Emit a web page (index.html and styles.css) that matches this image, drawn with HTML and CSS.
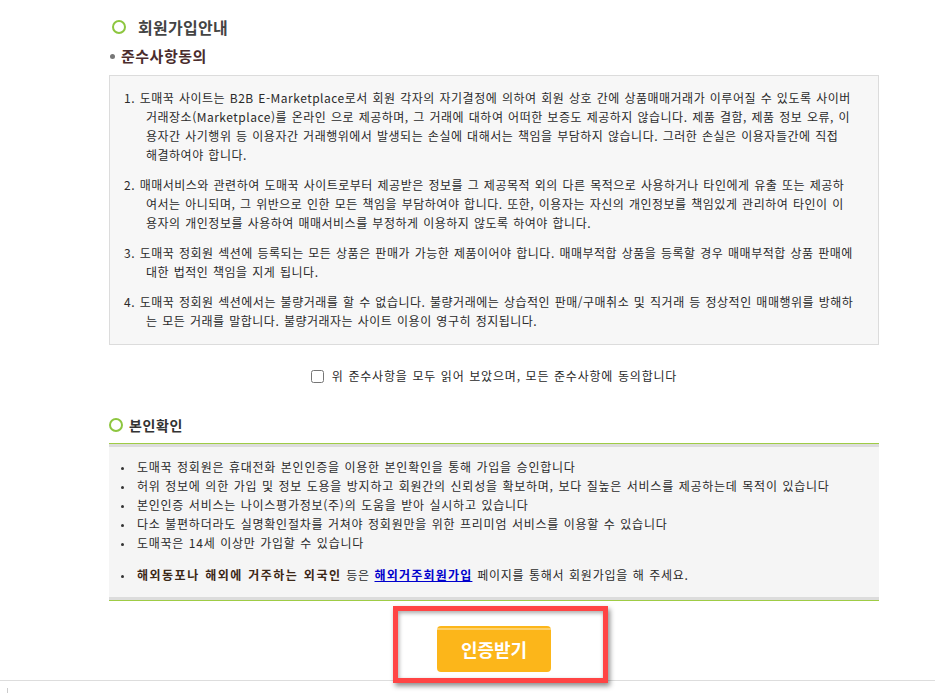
FILE: index.html
```html
<!DOCTYPE html>
<html lang="ko">
<head>
    <meta charset="utf-8">
    <title>회원가입안내</title>
    <link rel="stylesheet" href="styles.css">
</head>
<body>
    <div class="join-wrap">
        <!-- 회원가입안내 -->
        <h2 class="sec-title">회원가입안내</h2>
        <h3 class="sub-title">준수사항동의</h3>

        <ol class="agree-box">
            <li>1. 도매꾹 사이트는 B2B E-Marketplace로서 회원 각자의 자기결정에 의하여 회원 상호 간에 상품매매거래가 이루어질 수 있도록 사이버<br>거래장소(Marketplace)를 온라인 으로 제공하며, 그 거래에 대하여 어떠한 보증도 제공하지 않습니다. 제품 결함, 제품 정보 오류, 이<br>용자간 사기행위 등 이용자간 거래행위에서 발생되는 손실에 대해서는 책임을 부담하지 않습니다. 그러한 손실은 이용자들간에 직접<br>해결하여야 합니다.</li>
            <li>2. 매매서비스와 관련하여 도매꾹 사이트로부터 제공받은 정보를 그 제공목적 외의 다른 목적으로 사용하거나 타인에게 유출 또는 제공하<br>여서는 아니되며, 그 위반으로 인한 모든 책임을 부담하여야 합니다. 또한, 이용자는 자신의 개인정보를 책임있게 관리하여 타인이 이<br>용자의 개인정보를 사용하여 매매서비스를 부정하게 이용하지 않도록 하여야 합니다.</li>
            <li>3. 도매꾹 정회원 섹션에 등록되는 모든 상품은 판매가 가능한 제품이어야 합니다. 매매부적합 상품을 등록할 경우 매매부적합 상품 판매에<br>대한 법적인 책임을 지게 됩니다.</li>
            <li>4. 도매꾹 정회원 섹션에서는 불량거래를 할 수 없습니다. 불량거래에는 상습적인 판매/구매취소 및 직거래 등 정상적인 매매행위를 방해하<br>는 모든 거래를 말합니다. 불량거래자는 사이트 이용이 영구히 정지됩니다.</li>
        </ol>

        <p class="agree-check">
            <label><input type="checkbox" name="agree">위 준수사항을 모두 읽어 보았으며, 모든 준수사항에 동의합니다</label>
        </p>

        <!-- 본인확인 -->
        <h2 class="sec-title small">본인확인</h2>

        <ul class="auth-box">
            <li>도매꾹 정회원은 휴대전화 본인인증을 이용한 본인확인을 통해 가입을 승인합니다</li>
            <li>허위 정보에 의한 가입 및 정보 도용을 방지하고 회원간의 신뢰성을 확보하며, 보다 질높은 서비스를 제공하는데 목적이 있습니다</li>
            <li>본인인증 서비스는 나이스평가정보(주)의 도움을 받아 실시하고 있습니다</li>
            <li>다소 불편하더라도 실명확인절차를 거쳐야 정회원만을 위한 프리미엄 서비스를 이용할 수 있습니다</li>
            <li>도매꾹은 14세 이상만 가입할 수 있습니다</li>
            <li class="notice"><b>해외동포나 해외에 거주하는 외국인</b> 등은 <a href="#">해외거주회원가입</a> 페이지를 통해서 회원가입을 해 주세요.</li>
        </ul>

        <div class="btn-row">
            <a href="#" class="btn-auth">인증받기</a>
            <span class="mark"></span>
        </div>
    </div>

    <div class="footer"></div>
</body>
</html>
```

FILE: styles.css
```css
* {
    box-sizing: border-box;
}

body {
    margin: 0;
    background: #fff;
    color: #333;
    font-family: "Noto Sans CJK KR", "Noto Sans", sans-serif;
    font-size: 12px;
}

.join-wrap {
    width: 770px;
    margin-left: 109px;
    padding-top: 17px;
}

/* section titles */
.sec-title {
    display: flex;
    align-items: center;
    margin: 0;
    height: 20px;
    line-height: 20px;
    font-size: 16px;
    font-weight: 700;
    letter-spacing: 0.3px;
    color: #444;
}

.sec-title::before {
    content: "";
    width: 10px;
    height: 10px;
    margin: 0 12px 0 3px;
    border: 2.5px solid #8dc63f;
    border-radius: 50%;
}

.sec-title.small {
    margin-top: 27px;
    font-size: 14px;
    letter-spacing: 0.6px;
    color: #333;
}

.sec-title.small::before {
    margin: 0 6px 0 0;
}

.sub-title {
    display: flex;
    align-items: center;
    margin: 9px 0 0;
    height: 20px;
    line-height: 20px;
    font-size: 15px;
    font-weight: 700;
    letter-spacing: 0.5px;
    color: #4a2c2c;
}

.sub-title::before {
    content: "";
    width: 5px;
    height: 5px;
    margin: 0 6px 0 1px;
    border-radius: 50%;
    background: #777;
}

/* 준수사항 box */
.agree-box {
    list-style: none;
    margin: 9px 0 0;
    padding: 12px 6px 14px 36px;
    border: 1px solid #dcdcdc;
    background: #f7f7f7;
    color: #2a2a2a;
    line-height: 19px;
    letter-spacing: 0.5px;
    word-spacing: 0.8px;
    white-space: nowrap;
}

.agree-box li {
    text-indent: -22px;
}

.agree-box li + li {
    margin-top: 11px;
}

.agree-check {
    margin: 21px 0 0;
    line-height: 20px;
    text-align: center;
    color: #2a2a2a;
    letter-spacing: 0.8px;
    word-spacing: 0.6px;
}

.agree-check label {
    display: inline-flex;
    align-items: center;
}

.agree-check input {
    width: 13px;
    height: 13px;
    margin: 0 8px 0 0;
}

/* 본인확인 box */
.auth-box {
    list-style: none;
    margin: 8px 0 0;
    padding: 13px 0 16px;
    border-top: 1px solid #9fcc45;
    border-bottom: 1px solid #9fcc45;
    background: #f5f5f5;
    box-shadow: inset 0 3px 0 #dcdcdc, inset 0 -3px 0 #dcdcdc;
    color: #2a2a2a;
    line-height: 19px;
    letter-spacing: 0.75px;
    word-spacing: 0.6px;
}

.auth-box li::before {
    content: "";
    display: inline-block;
    width: 3px;
    height: 3px;
    margin: 0 13px 0 12px;
    border-radius: 50%;
    background: #333;
    vertical-align: middle;
}

.auth-box .notice {
    margin-top: 13px;
}

.auth-box .notice b {
    color: #3d2817;
    letter-spacing: 1.5px;
}

.auth-box .notice a {
    color: #0000cc;
    font-weight: 700;
    letter-spacing: 1.2px;
    text-decoration: underline;
}

/* button */
.btn-row {
    position: relative;
    padding-top: 25px;
    text-align: center;
}

.btn-auth {
    display: inline-block;
    width: 114px;
    height: 46px;
    line-height: 46px;
    border-radius: 4px;
    background: linear-gradient(#fcb61a 0, #fcb61a 2px, #fdd06a 2px, #fdd06a 4px, #fcb61a 4px);
    color: #fff;
    font-size: 18px;
    font-weight: 700;
    text-decoration: none;
    vertical-align: top;
}

/* highlight mark drawn over the button */
.mark {
    position: absolute;
    left: 284px;
    top: 5px;
    width: 215px;
    height: 77px;
    border: 5px solid #ff4444;
    box-shadow: 2px 3px 5px rgba(0, 0, 0, 0.45), inset 1px 2px 4px rgba(0, 0, 0, 0.35);
    z-index: 2;
}

.footer {
    margin-top: 8px;
    height: 20px;
    border-top: 1px solid #dddddd;
    padding: 7px 0 0 7px;
}

.footer::before {
    content: "";
    display: block;
    width: 1px;
    height: 8px;
    background: #cccccc;
}
```
